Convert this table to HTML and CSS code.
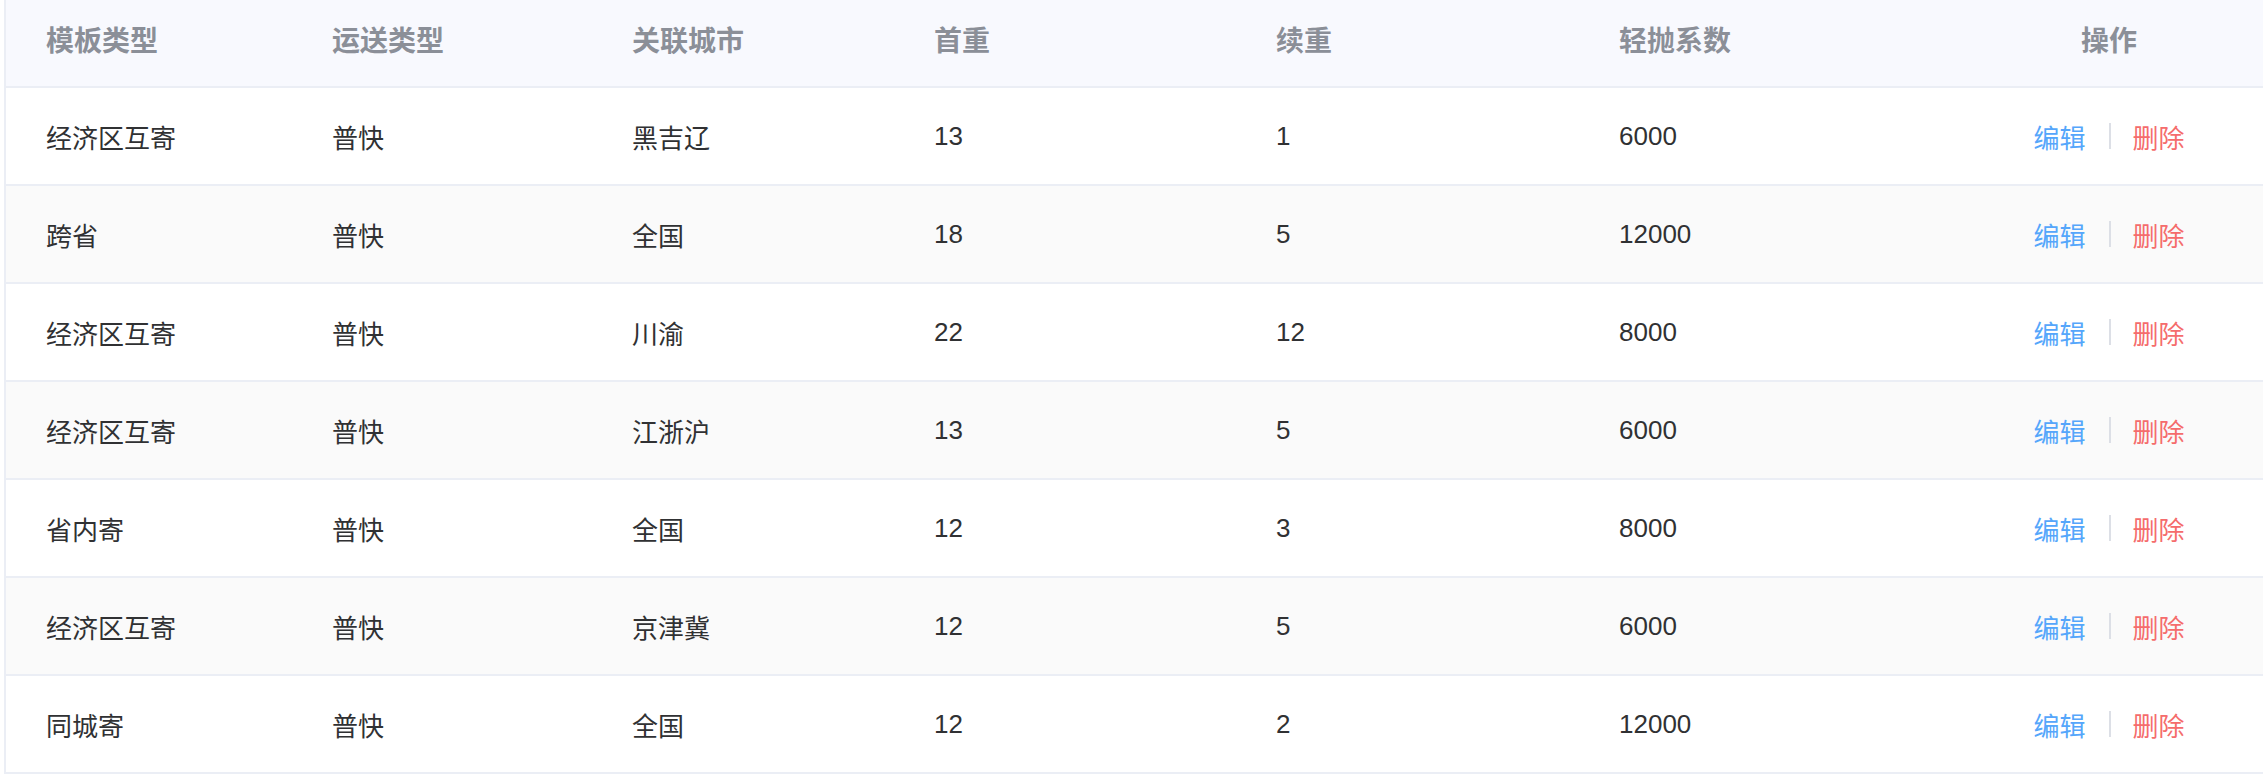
FILE: index.html
```html
<!DOCTYPE html>
<html lang="zh-CN">
<head>
<meta charset="utf-8">
<title>运费模板</title>
<link rel="stylesheet" href="styles.css">
</head>
<body>
<div class="page">
  <div class="table">
    <div class="row head">
      <div class="cell">模板类型</div>
      <div class="cell">运送类型</div>
      <div class="cell">关联城市</div>
      <div class="cell">首重</div>
      <div class="cell">续重</div>
      <div class="cell">轻抛系数</div>
      <div class="cell center">操作</div>
    </div>
    <div class="row">
      <div class="cell">经济区互寄</div><div class="cell">普快</div><div class="cell">黑吉辽</div><div class="cell">13</div><div class="cell">1</div><div class="cell">6000</div>
      <div class="cell center"><span class="act edit">编辑</span><span class="sep"></span><span class="act del">删除</span></div>
    </div>
    <div class="row stripe">
      <div class="cell">跨省</div><div class="cell">普快</div><div class="cell">全国</div><div class="cell">18</div><div class="cell">5</div><div class="cell">12000</div>
      <div class="cell center"><span class="act edit">编辑</span><span class="sep"></span><span class="act del">删除</span></div>
    </div>
    <div class="row">
      <div class="cell">经济区互寄</div><div class="cell">普快</div><div class="cell">川渝</div><div class="cell">22</div><div class="cell">12</div><div class="cell">8000</div>
      <div class="cell center"><span class="act edit">编辑</span><span class="sep"></span><span class="act del">删除</span></div>
    </div>
    <div class="row stripe">
      <div class="cell">经济区互寄</div><div class="cell">普快</div><div class="cell">江浙沪</div><div class="cell">13</div><div class="cell">5</div><div class="cell">6000</div>
      <div class="cell center"><span class="act edit">编辑</span><span class="sep"></span><span class="act del">删除</span></div>
    </div>
    <div class="row">
      <div class="cell">省内寄</div><div class="cell">普快</div><div class="cell">全国</div><div class="cell">12</div><div class="cell">3</div><div class="cell">8000</div>
      <div class="cell center"><span class="act edit">编辑</span><span class="sep"></span><span class="act del">删除</span></div>
    </div>
    <div class="row stripe">
      <div class="cell">经济区互寄</div><div class="cell">普快</div><div class="cell">京津冀</div><div class="cell">12</div><div class="cell">5</div><div class="cell">6000</div>
      <div class="cell center"><span class="act edit">编辑</span><span class="sep"></span><span class="act del">删除</span></div>
    </div>
    <div class="row">
      <div class="cell">同城寄</div><div class="cell">普快</div><div class="cell">全国</div><div class="cell">12</div><div class="cell">2</div><div class="cell">12000</div>
      <div class="cell center"><span class="act edit">编辑</span><span class="sep"></span><span class="act del">删除</span></div>
    </div>
  </div>
</div>
</body>
</html>
```
FILE: styles.css
```css
html, body {
  margin: 0;
  padding: 0;
  background: #ffffff;
}

body {
  font-family: "Liberation Sans", "Noto Sans CJK SC", sans-serif;
  color: #303133;
}

.page {
  padding-left: 4px;
}

.table {
  border-left: 2px solid #ebeef5;
  display: flex;
  flex-direction: column;
}

.row {
  display: grid;
  grid-template-columns: 286px 300px 302px 342px 343px 376px 1fr;
  height: 96px;
  border-bottom: 2px solid #ebeef5;
  background: #ffffff;
  font-size: 26px;
}

.row.stripe {
  background: #fafafa;
}

.row.head {
  height: 86px;
  background: #f8f9fe;
  color: #8b8f98;
  font-weight: 700;
  font-size: 28px;
}

.row.head .cell {
  padding-bottom: 8px;
}

.cell {
  display: flex;
  align-items: center;
  padding-left: 40px;
  white-space: nowrap;
  box-sizing: border-box;
}

.cell.center {
  justify-content: center;
  padding-left: 0;
}

.act {
  cursor: pointer;
}

.edit {
  color: #55a6fb;
}

.del {
  color: #f56c6c;
}

.sep {
  display: inline-block;
  width: 2px;
  height: 26px;
  background: #dcdfe6;
  margin: 0 22px 0 23px;
}
```
